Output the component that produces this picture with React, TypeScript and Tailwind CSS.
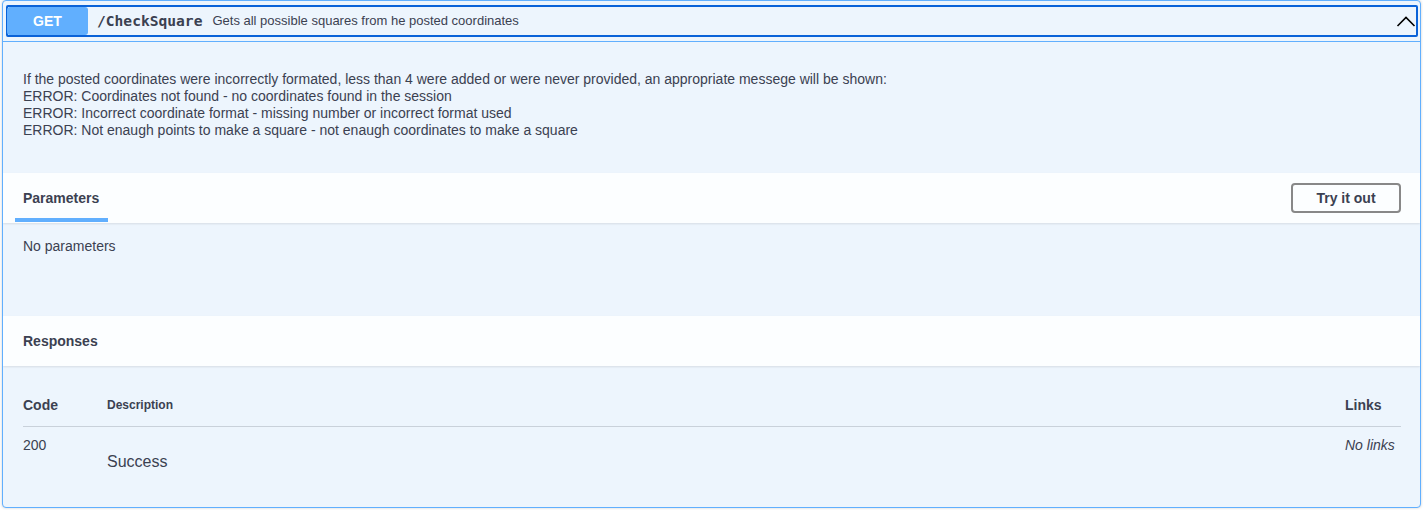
export default function App() {
  const sans = { fontFamily: '"Liberation Sans", Arial, sans-serif' };

  return (
    <div className="min-h-[510px] bg-white text-[#3b4151]" style={sans}>
      <div className="ml-[2px] w-[1419px] border border-[#61affe] rounded-[4px] bg-[#edf5fd] shadow-[0_0_3px_rgba(0,0,0,0.19)] overflow-hidden">
        {/* summary */}
        <div className="h-[41px] flex items-center pl-[3px] pr-[2px] border-b border-[#61affe]">
          <div className="flex-1 h-[32px] border-2 border-[#0a62d8] rounded-[2px] flex items-center">
            <span className="w-[81px] h-[28px] -ml-[1px] flex items-center justify-center rounded-[3px] bg-[#61affe] text-white text-[14px] font-bold">
              GET
            </span>
            <span className="ml-[9px] text-[14.6px] font-bold text-[#3b4151]" style={{ fontFamily: '"DejaVu Sans Mono", monospace' }}>
              /CheckSquare
            </span>
            <span className="ml-[10px] text-[13px] text-[#3b4151]">Gets all possible squares from he posted coordinates</span>
            <svg className="ml-auto w-[20px] h-[20px]" viewBox="0 0 20 20" fill="none">
              <polyline points="1.5,15 10,6.5 18.5,15" stroke="#000" strokeWidth="1.6" />
            </svg>
          </div>
        </div>

        {/* description */}
        <div className="h-[131px] px-[20px] pt-[29px] text-[14px] leading-[17px]">
          <p>If the posted coordinates were incorrectly formated, less than 4 were added or were never provided, an appropriate messege will be shown:</p>
          <p>ERROR: Coordinates not found - no coordinates found in the session</p>
          <p>ERROR: Incorrect coordinate format - missing number or incorrect format used</p>
          <p>ERROR: Not enaugh points to make a square - not enaugh coordinates to make a square</p>
        </div>

        {/* parameters */}
        <div className="h-[50px] flex items-center justify-between pl-[20px] pr-[19px] bg-[#fcfeff] shadow-[0_1px_2px_rgba(0,0,0,0.1)] relative">
          <div className="relative self-stretch flex items-center">
            <span className="text-[14px] font-bold">Parameters</span>
            <div className="absolute left-[-8px] right-[-9px] bottom-[1px] h-[4px] bg-[#61affe]" />
          </div>
          <button className="w-[110px] h-[30px] border-2 border-[#888] rounded-[4px] text-[14px] font-bold text-[#3b4151] bg-transparent">
            Try it out
          </button>
        </div>
        <div className="h-[93px] px-[20px] pt-[15px] text-[14px] leading-[17px]">No parameters</div>

        {/* responses */}
        <div className="h-[50px] flex items-center px-[20px] bg-[#fcfeff] shadow-[0_1px_2px_rgba(0,0,0,0.1)] relative">
          <span className="text-[14px] font-bold">Responses</span>
        </div>
        <div className="h-[141px] px-[20px] pt-[19px]">
          <div className="w-[1378px]">
            <div className="flex items-center py-[12px] border-b border-[rgba(59,65,81,0.2)]">
              <div className="w-[84px] text-[14px] leading-[17px] font-bold">Code</div>
              <div className="flex-1 text-[12px] leading-[17px] font-bold">Description</div>
              <div className="w-[56px] text-[14px] leading-[17px] font-bold">Links</div>
            </div>
            <div className="flex items-start pt-[10px]">
              <div className="w-[84px] text-[14px] leading-[17px]">200</div>
              <div className="flex-1 pt-[15px] text-[16px] leading-[19px]">Success</div>
              <div className="w-[56px] text-[14px] leading-[17px] italic">No links</div>
            </div>
          </div>
        </div>
      </div>
    </div>
  );
}
